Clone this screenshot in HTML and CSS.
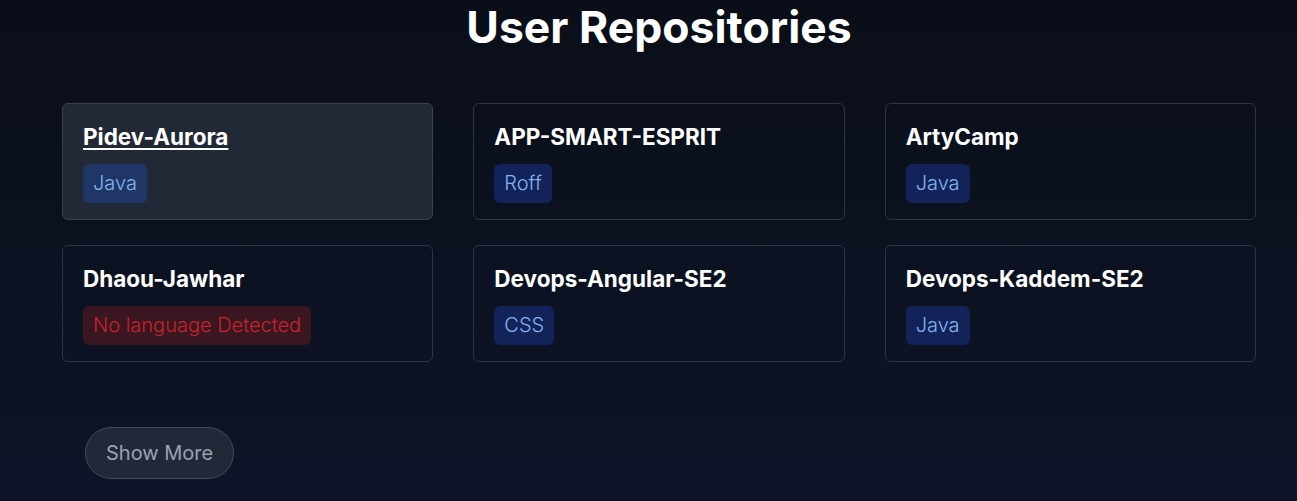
FILE: index.html
```html
<!DOCTYPE html>
<html>
<head>
<meta charset="utf-8">
<link rel="stylesheet" href="styles.css">
</head>
<body>
<section class="repos">
  <h1 class="title">User Repositories</h1>
  <div class="grid">
    <div class="card card--active">
      <a class="name name--link" href="#">Pidev-Aurora</a>
      <span class="badge badge--active">Java</span>
    </div>
    <div class="card">
      <a class="name" href="#">APP-SMART-ESPRIT</a>
      <span class="badge">Roff</span>
    </div>
    <div class="card">
      <a class="name" href="#">ArtyCamp</a>
      <span class="badge">Java</span>
    </div>
    <div class="card">
      <a class="name" href="#">Dhaou-Jawhar</a>
      <span class="badge badge--none">No language Detected</span>
    </div>
    <div class="card">
      <a class="name" href="#">Devops-Angular-SE2</a>
      <span class="badge">CSS</span>
    </div>
    <div class="card">
      <a class="name" href="#">Devops-Kaddem-SE2</a>
      <span class="badge">Java</span>
    </div>
  </div>
  <div class="more-row">
    <button class="more">Show More</button>
  </div>
</section>
</body>
</html>
```
FILE: styles.css
```css
* { box-sizing: border-box; }
html, body { margin: 0; height: 100%; }
body {
  font-family: Inter, "Noto Sans", sans-serif;
  background: linear-gradient(180deg, #0a0e18 0%, #0c1222 60%, #0e1528 100%);
  color: #fff;
  overflow: hidden;
}
.repos {
  padding: 5px 41px 0 62px;
}
.title {
  margin: 0;
  text-align: center;
  font-size: 44.5px;
  line-height: 44px;
  font-weight: 700;
  color: #fff;
}
.grid {
  margin-top: 54px;
  display: grid;
  grid-template-columns: repeat(3, 1fr);
  column-gap: 40px;
  row-gap: 25px;
}
.card {
  height: 117px;
  border: 1px solid #2c3545;
  border-radius: 6px;
  padding: 19px 20px 15px;
  display: flex;
  flex-direction: column;
  align-items: flex-start;
}
.card--active {
  background: #212937;
  border-color: #38414f;
}
.name {
  font-size: 22.5px;
  line-height: 28px;
  font-weight: 700;
  color: #fff;
  text-decoration: none;
}
.name--link {
  text-decoration: underline;
  text-underline-offset: 3px;
  text-decoration-thickness: 2px;
}
.badge {
  margin-top: 13px;
  padding: 6px 10px;
  line-height: 27px;
  font-size: 20px;
  font-weight: 300;
  color: #86b2ee;
  background: #12235a;
  border-radius: 6px;
}
.badge--active {
  background: #1f3667;
}
.badge--none {
  color: #c8222d;
  background: #3a1620;
}
.more-row {
  margin-top: 65px;
  padding-left: 23px;
}
.more {
  height: 52px;
  padding: 0 20px;
  border-radius: 26px;
  border: 1px solid #414a58;
  background: #212938;
  color: #9aa3b1;
  font-family: Inter, "Noto Sans", sans-serif;
  font-size: 20px;
  font-weight: 400;
}
```
